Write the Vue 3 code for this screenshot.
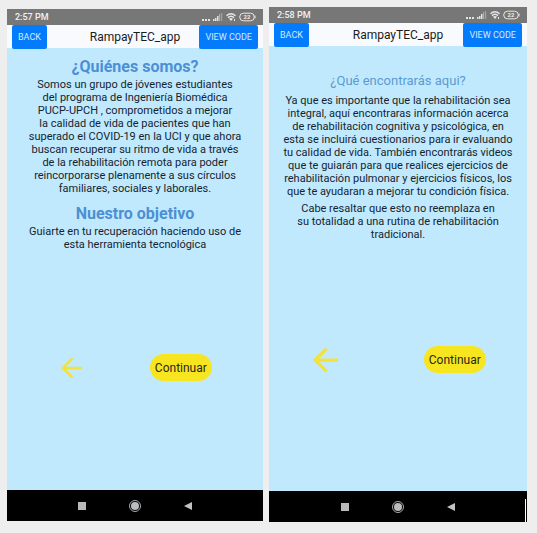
<script setup>
const phones = [
  {
    id: 'about',
    time: '2:57 PM',
    sections: [
      {
        title: '¿Quiénes somos?',
        paragraphs: [[
          'Somos un grupo de jóvenes estudiantes',
          'del programa de Ingeniería Biomédica',
          'PUCP-UPCH , comprometidos a mejorar',
          'la calidad de vida de pacientes que han',
          'superado el COVID-19 en la UCI y que ahora',
          'buscan recuperar su ritmo de vida a través',
          'de la rehabilitación remota para poder',
          'reincorporarse plenamente a sus círculos',
          'familiares, sociales y laborales.'
        ]]
      },
      {
        title: 'Nuestro objetivo',
        paragraphs: [[
          'Guiarte en tu recuperación haciendo uso de',
          'esta herramienta tecnológica'
        ]]
      }
    ]
  },
  {
    id: 'content',
    time: '2:58 PM',
    sections: [
      {
        title: '¿Qué encontrarás aqui?',
        paragraphs: [
          [
            'Ya que es importante que la rehabilitación sea',
            'integral, aquí encontraras información acerca',
            'de rehabilitación cognitiva y psicológica, en',
            'esta se incluirá cuestionarios para ir evaluando',
            'tu calidad de vida. También encontrarás videos',
            'que te guiarán para que realices ejercicios de',
            'rehabilitación pulmonar y ejercicios físicos, los',
            'que te ayudaran a mejorar tu condición física.'
          ],
          [
            'Cabe resaltar que esto no reemplaza en',
            'su totalidad a una rutina de rehabilitación',
            'tradicional.'
          ]
        ]
      }
    ]
  }
]
</script>

<template>
  <main class="board">
    <article v-for="phone in phones" :key="phone.id" class="phone" :class="phone.id">
      <div class="status">
        <span>{{ phone.time }}</span>
        <svg class="indicators" viewBox="0 0 56 12" aria-hidden="true">
          <g fill="#e4e4e4">
            <rect x="1" y="8" width="2" height="2" />
            <rect x="4" y="8" width="2" height="2" />
            <rect x="7" y="8" width="2" height="2" />
            <rect x="12" y="8" width="1.5" height="2" />
            <rect x="14" y="7" width="1.5" height="3" />
            <rect x="16" y="5" width="1.5" height="5" />
            <rect x="18" y="3" width="1.2" height="7" opacity=".5" />
            <rect x="20" y="2" width="1.2" height="8" opacity=".4" />
          </g>
          <g fill="none" stroke="#e8e8e8" stroke-width="1.5">
            <path d="M25.5 4.7Q30 .8 34.5 4.7M27 6.6Q30 4 33 6.6" />
            <path d="M28 7.8L30 10L32 7.8Q30 6.3 28 7.8Z" fill="#e8e8e8" stroke="none" />
            <path d="M33.500 8v2" stroke-width="1" />
            <rect x="38.7" y="2.2" width="14.6" height="7.6" rx="3.8" stroke-width="1" />
          </g>
          <path d="M54 4.5v3" stroke="#e8e8e8" />
          <text x="46" y="8.4" text-anchor="middle" fill="#eee" font-size="6" font-weight="700">22</text>
        </svg>
      </div>

      <header class="bar">
        <button type="button" class="bar-button">BACK</button>
        <h1>RampayTEC_app</h1>
        <button type="button" class="bar-button">VIEW CODE</button>
      </header>

      <div class="screen">
        <section v-for="section in phone.sections" :key="section.title">
          <h2>{{ section.title }}</h2>
          <p v-for="(lines, i) in section.paragraphs" :key="i">
            <template v-for="(line, n) in lines" :key="n"><br v-if="n">{{ line }}</template>
          </p>
        </section>
        <div class="actions">
          <button type="button" class="arrow" aria-label="Atrás">
            <svg viewBox="0 0 24 24" aria-hidden="true">
              <path d="M23 12H2M12.5 1.5L2 12L12.5 22.5" fill="none" stroke="#f3e13c" stroke-width="3" />
            </svg>
          </button>
          <button type="button" class="next">Continuar</button>
        </div>
      </div>

      <nav class="system">
        <button type="button" aria-label="Recientes">
          <svg viewBox="0 0 14 14"><rect x="3" y="3" width="8" height="8" fill="#b9b9b9" /></svg>
        </button>
        <button type="button" aria-label="Inicio">
          <svg viewBox="0 0 14 14">
            <circle cx="7" cy="7" r="5.5" fill="none" stroke="#a5abb0" />
            <circle cx="7" cy="7" r="4" fill="#bdbdbd" />
          </svg>
        </button>
        <button type="button" aria-label="Volver">
          <svg viewBox="0 0 14 14"><path d="M3 7L11 3V11Z" fill="#c2c2c2" /></svg>
        </button>
      </nav>
    </article>
  </main>
</template>

<style>
body {
  background: #eee;
}
</style>

<style scoped>
.board {
  box-sizing: border-box;
  min-height: 100vh;
  display: grid;
  grid-template-columns: 256fr 258fr;
  gap: 6px;
  padding: 7px 10px 11px 7px;
  font-family: Roboto, sans-serif;
}
.phone {
  display: flex;
  flex-direction: column;
  background: #c1e9fe;
}
.about {
  margin: 2px 0 1px;
}
button {
  font-family: inherit;
  border: 0;
  padding: 0;
  cursor: pointer;
}
svg {
  display: block;
}
.status {
  height: 16px;
  display: flex;
  align-items: center;
  justify-content: space-between;
  padding: 0 6px 0 8px;
  background: #777;
  color: #f2f2f2;
  font-size: 9px;
  font-weight: 500;
}
.indicators {
  width: 56px;
  height: 12px;
}
.bar {
  height: 23px;
  display: grid;
  grid-template-columns: 1fr auto 1fr;
  padding: 0 5px;
  background: #f8fafd;
}
.bar-button {
  justify-self: start;
  padding: 0 6px;
  border-radius: 2px;
  background: #047bfb;
  color: #d3eafe;
  font-size: 9px;
  white-space: nowrap;
}
.bar-button:last-child {
  justify-self: end;
}
h1 {
  margin: 0;
  color: #1b1b1d;
  font-size: 12px;
  line-height: 24px;
  font-weight: 400;
}
.screen {
  flex: 1;
  padding-top: 8px;
  text-align: center;
}
h2 {
  margin: 0;
  color: #4c8fd4;
  font-size: 16px;
  line-height: 22px;
  font-weight: 700;
}
p {
  margin: 0 0 8px;
  color: #14242e;
  font-size: 11px;
  line-height: 13px;
  white-space: nowrap;
}
.content .screen {
  padding-top: 24px;
}
.content h2 {
  margin-bottom: 2px;
  color: #5a9bd2;
  font-size: 13px;
  font-weight: 400;
}
.content p {
  margin-bottom: 4px;
}
.actions {
  display: flex;
  align-items: center;
  justify-content: space-between;
  margin-top: 103px;
  padding: 0 20% 0 21%;
}
.content .actions {
  margin-top: 105px;
  padding: 0 16% 0 17%;
}
.arrow {
  width: 22px;
  background: none;
}
.content .arrow {
  width: 26px;
}
.next {
  height: 27px;
  padding: 0 5px;
  border-radius: 14px;
  background: #f7e520;
  color: #29291b;
  font-size: 12px;
}
.system {
  height: 31px;
  display: flex;
  align-items: center;
  justify-content: center;
  gap: 39px;
  background: #000;
}
.content .system {
  background: linear-gradient(#fff, #fff) right 1px bottom / 1px 23px no-repeat #000;
}
.system button {
  width: 14px;
  background: none;
}
</style>
